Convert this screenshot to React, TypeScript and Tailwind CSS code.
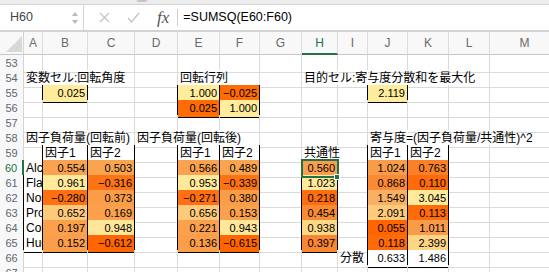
type Cell = { t?: string; n?: boolean; bg?: string; b?: boolean; over?: number };

const COLS = ["A", "B", "C", "D", "E", "F", "G", "H", "I", "J", "K", "L", "M"];
const GRID =
  "grid grid-cols-[24px_19px_45px_47px_43px_42px_40px_42px_36px_30px_40px_41px_41px_70px]";

const Y = "bg-[#ffec9d]";
const O = "bg-[#ff6b05]";

const num = (t: string, bg = "bg-white"): Cell => ({ t, n: true, bg, b: true });
const box = (t: string): Cell => ({ t, bg: "bg-white", b: true });

const DATA: Record<number, Record<string, Cell>> = {
  54: {
    A: { t: "変数セル:回転角度", over: 3 },
    E: { t: "回転行列", over: 2 },
    H: { t: "目的セル:寄与度分散和を最大化", over: 5 },
  },
  55: { B: num("0.025", Y), E: num("1.000", Y), F: num("−0.025", O), J: num("2.119", Y) },
  56: { E: num("0.025", O), F: num("1.000", Y) },
  58: {
    A: { t: "因子負荷量(回転前)", over: 3 },
    D: { t: "因子負荷量(回転後)", over: 3 },
    J: { t: "寄与度=(因子負荷量/共通性)^2", over: 4 },
  },
  59: {
    B: box("因子1"),
    C: box("因子2"),
    E: box("因子1"),
    F: box("因子2"),
    H: { t: "共通性", over: 2 },
    J: box("因子1"),
    K: box("因子2"),
  },
  60: {
    A: box("Alc"),
    B: num("0.554", "bg-[#f9a24f]"),
    C: num("0.503", "bg-[#f9a54f]"),
    E: num("0.566", "bg-[#f9a24f]"),
    F: num("0.489", "bg-[#f9a54f]"),
    H: num("0.560", "bg-[#f99e4c]"),
    J: num("1.024", "bg-[#f99c4a]"),
    K: num("0.763", "bg-[#fb8129]"),
  },
  61: {
    A: box("Flav"),
    B: num("0.961", "bg-[#ffe99a]"),
    C: num("−0.316", "bg-[#fd7416]"),
    E: num("0.953", "bg-[#ffe99a]"),
    F: num("−0.339", "bg-[#fd7314]"),
    H: num("1.023", "bg-[#ffe99a]"),
    J: num("0.868", "bg-[#fa8a36]"),
    K: num("0.110", "bg-[#fe6b08]"),
  },
  62: {
    A: box("Nor"),
    B: num("−0.280", "bg-[#fe7011]"),
    C: num("0.373", "bg-[#fa9d49]"),
    E: num("−0.271", "bg-[#fe7011]"),
    F: num("0.380", "bg-[#fa9d49]"),
    H: num("0.218", "bg-[#fe6e0f]"),
    J: num("1.549", "bg-[#fab062]"),
    K: num("3.045", "bg-[#ffe99b]"),
  },
  63: {
    A: box("Pro"),
    B: num("0.652", "bg-[#fcca7a]"),
    C: num("0.169", "bg-[#fba14d]"),
    E: num("0.656", "bg-[#fcca7a]"),
    F: num("0.153", "bg-[#fba14d]"),
    H: num("0.454", "bg-[#f98a36]"),
    J: num("2.091", "bg-[#fdcb7b]"),
    K: num("0.113", "bg-[#fe6b08]"),
  },
  64: {
    A: box("Col"),
    B: num("0.197", "bg-[#fba04d]"),
    C: num("0.948", "bg-[#ffe698]"),
    E: num("0.221", "bg-[#fba04d]"),
    F: num("0.943", "bg-[#ffe698]"),
    H: num("0.938", "bg-[#fdd887]"),
    J: num("0.055", "bg-[#ff6600]"),
    K: num("1.011", "bg-[#f99c4a]"),
  },
  65: {
    A: box("Hue"),
    B: num("0.152", "bg-[#fa9e4a]"),
    C: num("−0.612", "bg-[#ff6600]"),
    E: num("0.136", "bg-[#fa9e4a]"),
    F: num("−0.615", "bg-[#ff6600]"),
    H: num("0.397", "bg-[#f98632]"),
    J: num("0.118", "bg-[#fe6b08]"),
    K: num("2.399", "bg-[#fdd585]"),
  },
  66: { I: { t: "分散" }, J: num("0.633"), K: num("1.486") },
};

const ROWS = [53, 54, 55, 56, 57, 58, 59, 60, 61, 62, 63, 64, 65, 66, 67];

function isB(r: number, ci: number) {
  const c = COLS[ci];
  return !!(c && DATA[r]?.[c]?.b);
}

// gridlines hidden where text runs over into the next cell
const hidden = new Set<string>();
for (const r of ROWS) {
  COLS.forEach((c, ci) => {
    const over = DATA[r]?.[c]?.over ?? 1;
    for (let j = ci; j < ci + over - 1; j++) hidden.add(`${r}-${j}`);
  });
}

function FormulaBar() {
  return (
    <>
      <div className="h-[5px] bg-[#ececec] border-b border-b-[#d4d4d4]">
        <div className="ml-[137px] w-[10px] h-[2px] bg-[#c4c4c4] rounded-b" />
      </div>
      <div className="h-[27px] flex items-center bg-white border-b-2 border-b-[#d2d2d2]">
        <div className="w-[84px] h-full flex items-center justify-between pl-[10px] pr-[4px] border-r border-r-[#d6d6d6]">
          <span className="text-[12.5px] text-[#444]">H60</span>
          <svg width="8" height="16" viewBox="0 0 8 16">
            <path d="M1 6 L4 2 L7 6 Z" fill="#b8b8b8" />
            <path d="M1 10 L4 14 L7 10 Z" fill="#b8b8b8" />
          </svg>
        </div>
        <svg className="ml-[15px]" width="11" height="11" viewBox="0 0 11 11">
          <path d="M1 1 L10 10 M10 1 L1 10" stroke="#c4c4c4" strokeWidth="1.3" />
        </svg>
        <svg className="ml-[17px]" width="13" height="11" viewBox="0 0 13 11">
          <path d="M1 6 L4.5 10 L12 1" stroke="#c4c4c4" strokeWidth="1.3" fill="none" />
        </svg>
        <span className="ml-[17px] font-['Liberation_Serif',serif] italic text-[17px] leading-none text-[#555]">
          fx
        </span>
        <div className="ml-[8px] w-px h-[17px] bg-[#d0d0d0]" />
        <span className="ml-[5px] text-[12.5px] text-black">=SUMSQ(E60:F60)</span>
      </div>
    </>
  );
}

function Header() {
  return (
    <div className={`${GRID} h-[23px] bg-[#f8f8f8]`}>
      <div className="relative border-r border-b border-r-[#d4d4d4] border-b-[#c8c8c8]">
        <svg className="absolute right-[1px] bottom-[2px]" width="16" height="16" viewBox="0 0 16 16">
          <path d="M16 0 L16 16 L0 16 Z" fill="#d8d8d8" />
        </svg>
      </div>
      {COLS.map((c) => (
        <div
          key={c}
          className={`flex items-center justify-center border-r border-r-[#dcdcdc] text-[12px] ${
            c === "H"
              ? "border-b-2 border-b-[#217346] text-[#217346]"
              : "border-b border-b-[#c8c8c8] text-[#6a6a6a]"
          }`}
        >
          {c}
        </div>
      ))}
    </div>
  );
}

function Row({ r }: { r: number }) {
  const active = r === 60;
  return (
    <div className={`${GRID} h-[15px]`}>
      <div
        className={`flex items-center justify-center bg-[#f8f8f8] border-b border-b-[#dcdcdc] text-[11px] ${
          active
            ? "border-r-2 border-r-[#217346] text-[#217346]"
            : `border-r ${isB(r, 0) ? "border-r-black" : "border-r-[#d4d4d4]"} text-[#5b6675]`
        }`}
      >
        {r}
      </div>
      {COLS.map((col, ci) => {
        const cell = DATA[r]?.[col];
        const right =
          isB(r, ci) || isB(r, ci + 1)
            ? "border-r-black"
            : hidden.has(`${r}-${ci}`)
            ? "border-r-white"
            : "border-r-[#dadada]";
        const bottom = isB(r, ci) || isB(r + 1, ci) ? "border-b-black" : "border-b-[#dadada]";
        const sel = r === 60 && col === "H";
        return (
          <div
            key={col}
            className={`relative border-r border-b ${right} ${bottom} ${cell?.bg ?? ""} ${
              cell?.b && !sel ? "overflow-hidden" : ""
            }`}
          >
            {cell?.t && (
              <span
                className={`block whitespace-nowrap pt-px leading-[14px] text-black ${
                  cell.b ? "" : "relative z-10"
                } ${cell.n ? "text-right text-[11px] pr-[2px]" : "text-left text-[12px] pl-[2px]"}`}
              >
                {cell.t}
              </span>
            )}
            {sel && (
              <div className="absolute -left-px -top-px -right-[2px] -bottom-px border-2 border-[#217346] z-20">
                <div className="absolute -right-[3px] -bottom-[4px] w-[6px] h-[6px] bg-[#217346] border border-white" />
              </div>
            )}
          </div>
        );
      })}
    </div>
  );
}

export default function App() {
  return (
    <div className="w-[549px] h-[272px] overflow-hidden bg-white font-['Liberation_Sans','Noto_Sans_CJK_JP',sans-serif]">
      <FormulaBar />
      <Header />
      {ROWS.map((r) => (
        <Row key={r} r={r} />
      ))}
    </div>
  );
}
